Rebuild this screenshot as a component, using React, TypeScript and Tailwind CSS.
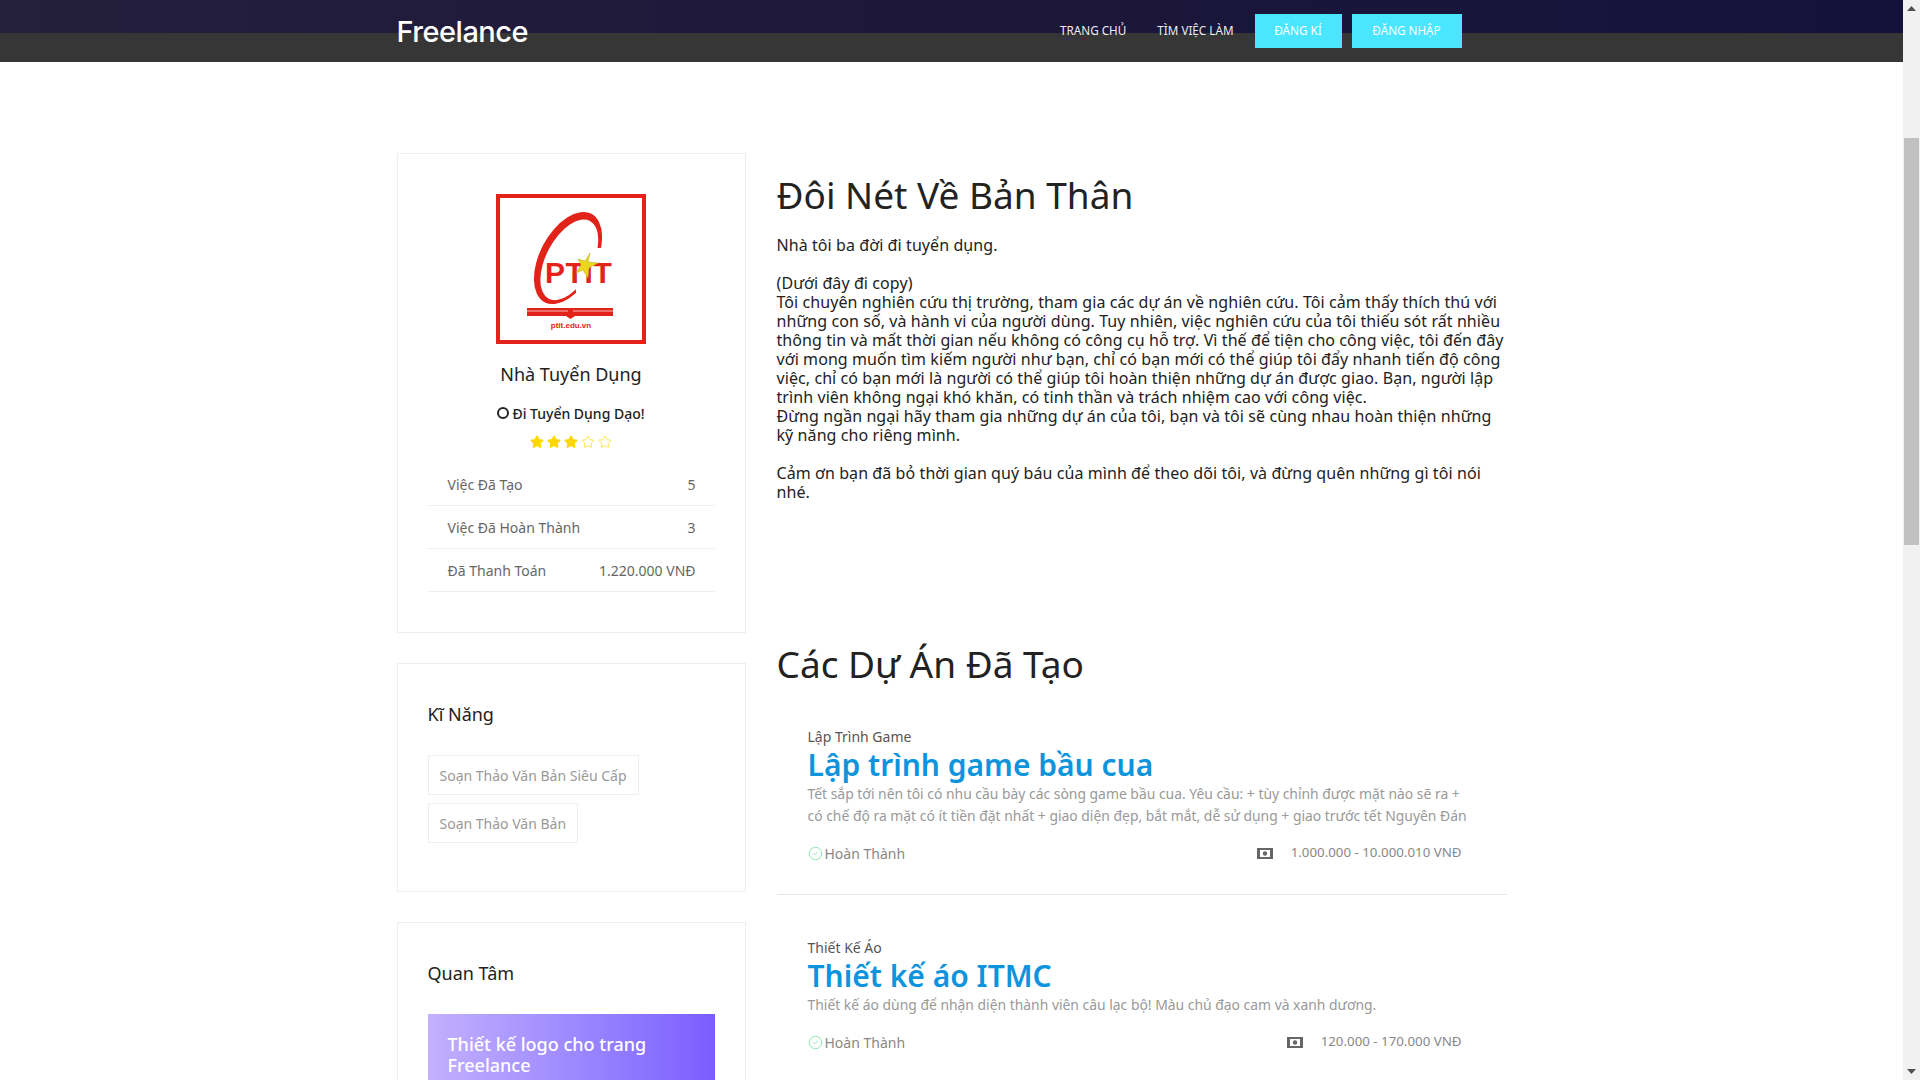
import React from 'react';
import { Star, CircleCheck } from 'lucide-react';

const aboutLines = [
  'Nhà tôi ba đời đi tuyển dụng.',
  '\u00a0',
  '(Dưới đây đi copy)',
  'Tôi chuyên nghiên cứu thị trường, tham gia các dự án về nghiên cứu. Tôi cảm thấy thích thú với',
  'những con số, và hành vi của người dùng. Tuy nhiên, việc nghiên cứu của tôi thiếu sót rất nhiều',
  'thông tin và mất thời gian nếu không có công cụ hỗ trợ. Vì thế để tiện cho công việc, tôi đến đây',
  'với mong muốn tìm kiếm người như bạn, chỉ có bạn mới có thể giúp tôi đẩy nhanh tiến độ công',
  'việc, chỉ có bạn mới là người có thể giúp tôi hoàn thiện những dự án được giao. Bạn, người lập',
  'trình viên không ngại khó khăn, có tinh thần và trách nhiệm cao với công việc.',
  'Đừng ngần ngại hãy tham gia những dự án của tôi, bạn và tôi sẽ cùng nhau hoàn thiện những',
  'kỹ năng cho riêng mình.',
  '\u00a0',
  'Cảm ơn bạn đã bỏ thời gian quý báu của mình để theo dõi tôi, và đừng quên những gì tôi nói',
  'nhé.',
];

const stats = [
  { label: 'Việc Đã Tạo', value: '5' },
  { label: 'Việc Đã Hoàn Thành', value: '3' },
  { label: 'Đã Thanh Toán', value: '1.220.000 VNĐ' },
];

const Logo = () => (
  <svg width="150" height="150" viewBox="0 0 150 150">
    <defs>
      <clipPath id="ring">
        <path d="M0 0H150V54H100L80 92V118H0Z" />
      </clipPath>
    </defs>
    <rect x="2" y="2" width="146" height="146" fill="#fff" stroke="#e2231a" strokeWidth="4" />
    <g clipPath="url(#ring)">
      <path
        fillRule="evenodd"
        fill="#e2231a"
        transform="rotate(28 72 64)"
        d="M44 64a28 50 0 1 0 56 0a28 50 0 1 0 -56 0ZM51 65a23 44 0 1 0 46 0a23 44 0 1 0 -46 0Z"
      />
    </g>
    <text x="49" y="89" fontFamily="Liberation Sans, sans-serif" fontWeight="700" fontSize="30" letterSpacing="0.6" fill="#e2231a">PTIT</text>
    <polygon
      points="94,59 92,68 102,69 93,74 92,84 87,76 80,79 85,71 82,65 89,67"
      fill="#e8d820"
      stroke="#b9a51c"
      strokeWidth="0.5"
    />
    <rect x="31" y="114" width="86" height="8" fill="#e2231a" />
    <path d="M31 117H72M77 117H117" stroke="#fff" strokeWidth="0.7" />
    <path d="M70 122L74.500 125L79 122Z" fill="#e2231a" />
    <text x="75" y="134" textAnchor="middle" fontFamily="Liberation Sans, sans-serif" fontWeight="700" fontSize="8" fill="#e2231a">ptit.edu.vn</text>
  </svg>
);

const MoneyIcon = () => (
  <svg width="16" height="11" viewBox="0 0 16 11">
    <rect width="16" height="11" fill="#666" />
    <rect x="3" y="2" width="10" height="7" fill="#fff" />
    <circle cx="8" cy="5.500" r="2.200" fill="#666" />
  </svg>
);

const Card = ({ children, className }: { children: React.ReactNode; className: string }) => (
  <div className={`border border-[#eeeeee] px-[30px] ${className}`}>{children}</div>
);

const Project = ({
  category,
  title,
  desc,
  budget,
}: {
  category: string;
  title: string;
  desc: string[];
  budget: string;
}) => (
  <div className="pl-[31px] pr-[45px]">
    <div className="text-[14px] leading-5 text-[#555555] mt-px">{category}</div>
    <h3 className="text-[30px] leading-9 font-semibold text-[#0d94dd] whitespace-nowrap">{title}</h3>
    <div className="text-[13.9px] leading-[22px] text-[#999999] whitespace-nowrap">
      {desc.map((line) => (
        <div key={line}>{line}</div>
      ))}
    </div>
    <div className="flex items-center justify-between mt-4 h-5 text-[14px] text-[#888888]">
      <div className="flex items-center gap-[2px]">
        <CircleCheck className="w-[15px] h-[15px] text-[#86e6ab]" strokeWidth={1.5} />
        <span>Hoàn Thành</span>
      </div>
      <div className="flex items-center gap-[18px] text-[13.3px]">
        <MoneyIcon />
        <span>{budget}</span>
      </div>
    </div>
  </div>
);

const Navbar = () => (
  <header className="h-[62px] shrink-0 bg-[linear-gradient(to_bottom,transparent_33px,#363636_33px),linear-gradient(to_right,#241f3b,#15113a)]">
    <div className="w-[1140px] mx-auto pl-[15px] pr-[60px] h-[62px] flex items-center justify-between">
      <a className="text-[29px] leading-none font-medium text-white font-['Inter',sans-serif] tracking-[-0.5px]">Freelance</a>
      <nav className="flex items-center text-[11.7px] text-[#eeeeee] uppercase">
        <a className="mr-[31px]">Trang chủ</a>
        <a className="mr-[21px]">Tìm việc làm</a>
        <a className="w-[87px] h-[34px] mr-[10px] flex items-center justify-center bg-[#4ae6ff] text-white">Đăng kí</a>
        <a className="w-[110px] h-[34px] flex items-center justify-center bg-[#4ae6ff] text-white">Đăng nhập</a>
      </nav>
    </div>
  </header>
);

const Sidebar = () => (
  <aside className="w-[349px] shrink-0 flex flex-col gap-[30px]">
    <Card className="pt-10 pb-10 flex flex-col items-center">
      <Logo />
      <h4 className="mt-[18px] text-[18px] leading-6 text-[#222222]">Nhà Tuyển Dụng</h4>
      <div className="mt-[17px] h-5 flex items-center gap-[3px] text-[14px] font-medium text-[#222222]">
        <span className="w-3 h-3 rounded-full border-2 border-[#222222]" />
        Đi Tuyển Dụng Dạo!
      </div>
      <div className="mt-3 h-[14px] flex gap-[3px]">
        {[0, 1, 2, 3, 4].map((i) => (
          <Star
            key={i}
            className="w-[14px] h-[14px] text-[#ffd700]"
            strokeWidth={i < 3 ? 2 : 1.2}
            fill={i < 3 ? '#ffd700' : 'none'}
          />
        ))}
      </div>
      <div className="mt-[14px] w-full">
        {stats.map((s) => (
          <div
            key={s.label}
            className="h-[43px] pl-5 pr-[19px] flex items-center justify-between border-b border-[#eeeeee] text-[14px] text-[#666666]"
          >
            <span>{s.label}</span>
            <span>{s.value}</span>
          </div>
        ))}
      </div>
    </Card>

    <Card className="pt-[39px] pb-12">
      <h4 className="text-[18px] leading-[22px] text-[#222222]">Kĩ Năng</h4>
      <div className="mt-[30px] flex flex-col items-start gap-2">
        <span className="h-10 px-[11px] flex items-center border border-[#eeeeee] text-[14px] text-[#999999]">Soạn Thảo Văn Bản Siêu Cấp</span>
        <span className="h-10 px-[11px] flex items-center border border-[#eeeeee] text-[14px] text-[#999999]">Soạn Thảo Văn Bản</span>
      </div>
    </Card>

    <Card className="pt-[39px] pb-10">
      <h4 className="text-[18px] leading-[22px] text-[#222222]">Quan Tâm</h4>
      <div className="mt-[30px] h-[200px] p-5 bg-gradient-to-r from-[#c4b0fd] to-[#7b5cff] text-[18px] leading-[21px] font-medium text-white">
        <div>Thiết kế logo cho trang Freelance</div>
        <div>8.000.000 VNĐ</div>
      </div>
    </Card>
  </aside>
);

export default function App() {
  return (
    <div className="h-screen overflow-hidden flex bg-white font-['Noto_Sans',sans-serif]">
      <div className="flex-1 min-w-0 flex flex-col">
        <Navbar />
        <main className="w-[1140px] mx-auto px-[15px] pt-[91px] flex gap-[31px]">
          <Sidebar />
          <section className="w-[730px] shrink-0">
            <h2 className="mt-5 text-[37px] leading-[43px] text-[#222222] whitespace-nowrap">Đôi Nét Về Bản Thân</h2>
            <div className="mt-5 text-[16px] tracking-[0.08px] leading-[19px] text-[#222222] whitespace-nowrap">
              {aboutLines.map((line, i) => (
                <div key={i}>{line}</div>
              ))}
            </div>
            <h2 className="mt-[140px] text-[37px] leading-[43px] text-[#222222] whitespace-nowrap">Các Dự Án Đã Tạo</h2>
            <div className="mt-[42px]">
              <Project
                category="Lập Trình Game"
                title="Lập trình game bầu cua"
                desc={[
                  'Tết sắp tới nên tôi có nhu cầu bày các sòng game bầu cua. Yêu cầu: + tùy chỉnh được mặt nào sẽ ra +',
                  'có chế độ ra mặt có ít tiền đặt nhất + giao diện đẹp, bắt mắt, dễ sử dụng + giao trước tết Nguyên Đán',
                ]}
                budget="1.000.000 - 10.000.010 VNĐ"
              />
            </div>
            <div className="mt-[31px] mb-[43px] border-t border-[#e2e8f0]" />
            <Project
              category="Thiết Kế Áo"
              title="Thiết kế áo ITMC"
              desc={['Thiết kế áo dùng để nhận diện thành viên câu lạc bộ! Màu chủ đạo cam và xanh dương.']}
              budget="120.000 - 170.000 VNĐ"
            />
          </section>
        </main>
      </div>
      {/* scrollbar */}
      <div className="w-[17px] shrink-0 bg-[#f1f1f1] flex flex-col items-center">
        <svg width="17" height="17" viewBox="0 0 17 17" className="shrink-0">
          <path d="M8.500 6L13 11H4Z" fill="#505050" />
        </svg>
        <div className="mt-[121px] w-[15px] h-[407px] shrink-0 bg-[#c1c1c1]" />
        <svg width="17" height="17" viewBox="0 0 17 17" className="shrink-0 mt-auto">
          <path d="M8.500 11L13 6H4Z" fill="#505050" />
        </svg>
      </div>
    </div>
  );
}
